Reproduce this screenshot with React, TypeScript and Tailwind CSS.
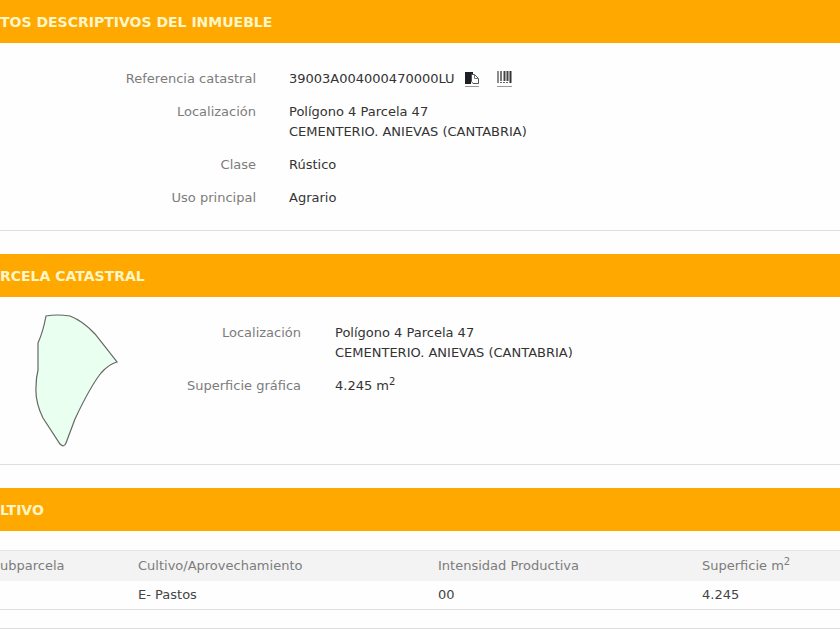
import type { ReactNode } from 'react'

interface Crop { sub: string; use: string; intensity: string; area: string }

const crops: Crop[] = [{ sub: '', use: 'E- Pastos', intensity: '00', area: '4.245' }]

const SectionTitle = ({ children }: { children: ReactNode }) => (
  <h2 className="flex items-center h-[43px] bg-[#ffa800] text-[#fff6c8] text-[14px] leading-[20px] font-bold whitespace-nowrap">{children}</h2>
)

const Field = ({ label, labelClass, children }: { label: string; labelClass: string; children: ReactNode }) => (
  <div className="flex">
    <dt className={`${labelClass} shrink-0 text-right text-[#7c7c7c]`}>{label}</dt>
    <dd className="text-[#333333]">{children}</dd>
  </div>
)

const Squared = () => <sup className="text-[10px] leading-none top-[-5px]">2</sup>

const CopyIcon = () => (
  <svg width="14" height="18" viewBox="0 0 14 18" aria-hidden="true">
    <path d="M0 2h8v4h-2v8h-6z" fill="#1c1f24" />
    <path d="M6.500 4.500h3l4 4v5h-5.500l-1.500-2z" fill="#fff" stroke="#555" />
    <path d="M9.500 4.500v4h4" fill="none" stroke="#777" />
    <path d="M0 16.500h14" stroke="#999" />
  </svg>
)

const BarcodeIcon = () => (
  <svg width="15" height="18" viewBox="0 0 15 18" aria-hidden="true">
    <path d="M1 1v12" stroke="#666" strokeWidth="1.500" />
    <path d="M4 1v10" stroke="#777" strokeWidth="2" />
    <path d="M7.500 1v10M10.500 1v10" stroke="#444" strokeWidth="2" />
    <path d="M13.500 1v12" stroke="#333" strokeWidth="2" />
    <path d="M3 12.500h2m1 0h2m1 0h2" stroke="#666" />
    <path d="M0 16.500h15" stroke="#999" />
  </svg>
)

export default function App() {
  return (
    <main className="bg-[#fefefe] font-['DejaVu_Sans',sans-serif] text-[13px] leading-[20px] overflow-hidden">
      <section className="mb-[23px] border-b border-[#dedede]">
        <SectionTitle>TOS DESCRIPTIVOS DEL INMUEBLE</SectionTitle>
        <dl className="flex flex-col gap-[13px] pt-[26px] pb-[22px]">
          <Field label="Referencia catastral" labelClass="w-64 mr-[33px]">
            <span className="flex items-center h-5">
              39003A004000470000LU
              <button type="button" aria-label="Copiar" className="ml-[10px]"><CopyIcon /></button>
              <button type="button" aria-label="Código de barras" className="ml-[18px]"><BarcodeIcon /></button>
            </span>
          </Field>
          <Field label="Localización" labelClass="w-64 mr-[33px]">
            Polígono 4 Parcela 47<br />CEMENTERIO. ANIEVAS (CANTABRIA)
          </Field>
          <Field label="Clase" labelClass="w-64 mr-[33px]">Rústico</Field>
          <Field label="Uso principal" labelClass="w-64 mr-[33px]">Agrario</Field>
        </dl>
      </section>

      <section className="mb-[23px] border-b border-[#dedede]">
        <SectionTitle>RCELA CATASTRAL</SectionTitle>
        <div className="flex pt-[17px] pb-4">
          <svg width="84" height="134" viewBox="0 0 84 134" className="ml-[35px] shrink-0" aria-hidden="true">
            <path
              d="M11 2Q22 0 35 2Q48 7 60 20L82 48Q74 50 66 59Q55 73 40 105L31 129Q29 134 25 130L8 104Q0 88 1 73Q1 64 3 56L3 29Q8 18 11 2Z"
              fill="#e9ffef"
              stroke="#666"
              strokeWidth="1.200"
            />
          </svg>
          <dl className="flex flex-col gap-[13px] pt-[9px]">
            <Field label="Localización" labelClass="w-[182px] mr-[34px]">
              Polígono 4 Parcela 47<br />CEMENTERIO. ANIEVAS (CANTABRIA)
            </Field>
            <Field label="Superficie gráfica" labelClass="w-[182px] mr-[34px]">4.245 m<Squared /></Field>
          </dl>
        </div>
      </section>

      <section className="border-b border-[#dedede] pb-[18px]">
        <SectionTitle>LTIVO</SectionTitle>
        <table className="mt-[19px] w-full table-fixed text-left">
          <thead>
            <tr className="border-t border-[#e4e4e4] bg-[#f3f3f3] text-[#7c7c7c]">
              <th className="w-[138px] py-[5px] font-normal">ubparcela</th>
              <th className="w-[300px] py-[5px] font-normal">Cultivo/Aprovechamiento</th>
              <th className="w-[264px] py-[5px] font-normal">Intensidad Productiva</th>
              <th className="py-[5px] font-normal">Superficie m<Squared /></th>
            </tr>
          </thead>
          <tbody>
            {crops.map(c => (
              <tr key={c.use} className="border-b border-[#dedede] text-[#444444]">
                <td className="py-1">{c.sub}</td>
                <td className="py-1">{c.use}</td>
                <td className="py-1">{c.intensity}</td>
                <td className="py-1">{c.area}</td>
              </tr>
            ))}
          </tbody>
        </table>
      </section>
    </main>
  )
}
